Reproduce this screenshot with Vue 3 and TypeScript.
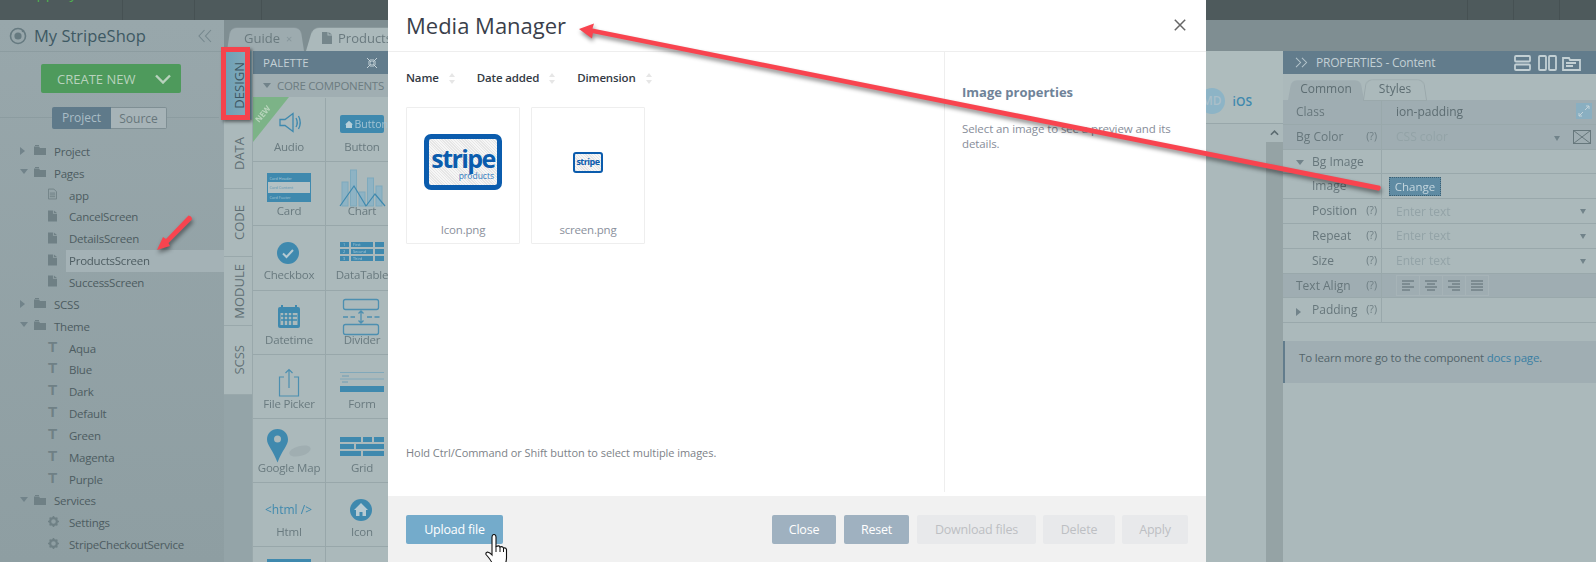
<script setup lang="ts">
type TreeRow = {
  label: string
  icon: 'folder' | 'file' | 'note' | 'theme' | 'gear'
  arrow?: 'open' | 'closed'
  active?: boolean
}

type PropRow = {
  label: string
  help?: boolean
  indent?: boolean
  arrow?: 'open' | 'closed'
  value?: string
  hint?: string
  caret?: boolean
}

const tree: TreeRow[] = [
  { label: 'Project', icon: 'folder', arrow: 'closed' },
  { label: 'Pages', icon: 'folder', arrow: 'open' },
  { label: 'app', icon: 'note' },
  { label: 'CancelScreen', icon: 'file' },
  { label: 'DetailsScreen', icon: 'file' },
  { label: 'ProductsScreen', icon: 'file', active: true },
  { label: 'SuccessScreen', icon: 'file' },
  { label: 'SCSS', icon: 'folder', arrow: 'closed' },
  { label: 'Theme', icon: 'folder', arrow: 'open' },
  { label: 'Aqua', icon: 'theme' },
  { label: 'Blue', icon: 'theme' },
  { label: 'Dark', icon: 'theme' },
  { label: 'Default', icon: 'theme' },
  { label: 'Green', icon: 'theme' },
  { label: 'Magenta', icon: 'theme' },
  { label: 'Purple', icon: 'theme' },
  { label: 'Services', icon: 'folder', arrow: 'open' },
  { label: 'Settings', icon: 'gear' },
  { label: 'StripeCheckoutService', icon: 'gear' }
]

const sideTabs = ['DESIGN', 'DATA', 'CODE', 'MODULE', 'SCSS']

const palette = [
  'Audio', 'Button', 'Card', 'Chart', 'Checkbox', 'DataTable', 'Datetime', 'Divider',
  'File Picker', 'Form', 'Google Map', 'Grid', 'Html', 'Icon', '', ''
]

const tableRows = [
  { n: '1', name: 'First', y: 16 },
  { n: '2', name: 'Second', y: 23 },
  { n: '3', name: 'Third', y: 30 }
]

const propRows: PropRow[] = [
  { label: 'Bg Image', indent: true, arrow: 'open' },
  { label: 'Image', indent: true, value: 'change' },
  { label: 'Position', indent: true, help: true, hint: 'Enter text', caret: true },
  { label: 'Repeat', indent: true, help: true, hint: 'Enter text', caret: true },
  { label: 'Size', indent: true, help: true, hint: 'Enter text', caret: true }
]
</script>

<template>
  <div class="page">
    <header class="topbar">
      <div class="top-logo"><span>Appery.io</span></div>
      <div class="top-cell w72"></div>
      <div class="top-cell w67"></div>
      <div class="top-spacer"></div>
      <div class="top-cell w45"></div>
      <div class="top-cell w46"></div>
      <div class="top-cell w37"></div>
    </header>

    <div class="main">
      <aside class="sidebar">
        <div class="side-head">
          <svg class="ion-logo" viewBox="0 0 18 18" width="18" height="18">
            <circle cx="9" cy="9" r="7.5" fill="none" stroke="#667a80" stroke-width="1.6" />
            <circle cx="9" cy="9" r="3.6" fill="#667a80" />
            <circle cx="14" cy="4" r="1.3" fill="#667a80" />
          </svg>
          <span class="side-title">My StripeShop</span>
          <svg class="collapse" viewBox="0 0 14 14" width="14" height="14">
            <path d="M6.5 1 1 7l5.5 6M13 1 7.500 7l5.500 6" fill="none" stroke="#75878d" stroke-width="1.100" />
          </svg>
        </div>

        <button class="create-btn">
          <span>CREATE NEW</span>
          <svg viewBox="0 0 16 10" width="16" height="10">
            <path d="M1 1.500 8 8.500l7-7" fill="none" stroke="#b8d2bd" stroke-width="2.400" />
          </svg>
        </button>

        <div class="toggle-row">
          <div class="toggle">
            <span class="toggle-on">Project</span>
            <span class="toggle-off">Source</span>
          </div>
        </div>

        <ul class="tree">
          <li
            v-for="row in tree"
            :key="row.label"
            class="tree-row"
            :class="{ child: !row.arrow, active: row.active }"
          >
            <i v-if="row.arrow" class="tri" :class="row.arrow"></i>
            <svg v-if="row.icon === 'folder'" class="t-icon" viewBox="0 0 12 10" width="12" height="10">
              <path d="M0 1.500h5l1 1.500h6v7H0zM1 0h4v1H1z" fill="#6f8085" />
            </svg>
            <svg v-else-if="row.icon === 'file'" class="t-icon" viewBox="0 0 10 12" width="9" height="12">
              <path d="M0 0h5.500v3.500H10V12H0zM6.500 0 10 2.600H6.500z" fill="#6f8085" />
            </svg>
            <svg v-else-if="row.icon === 'note'" class="t-icon" viewBox="0 0 10 12" width="9" height="12">
              <path d="M.5.500h6l3 3v8h-9z" fill="none" stroke="#6f8085" />
              <path d="M2 5h6M2 7h6M2 9h6" stroke="#6f8085" />
            </svg>
            <span v-else-if="row.icon === 'theme'" class="t-letter">T</span>
            <svg v-else class="t-icon" viewBox="0 0 12 12" width="11" height="11">
              <circle cx="6" cy="6" r="3.700" fill="none" stroke="#6f8085" stroke-width="2.400" />
              <path d="M6 0v2M6 10v2M0 6h2M10 6h2M1.800 1.800l1.400 1.400M8.800 8.800l1.400 1.400M1.800 10.200l1.400-1.400M8.800 3.200l1.400-1.400" stroke="#6f8085" stroke-width="1.700" />
            </svg>
            <span class="t-label">{{ row.label }}</span>
          </li>
        </ul>
      </aside>

      <section class="center">
        <div class="file-tabs">
          <div class="file-tab guide">Guide <small>×</small></div>
          <div class="file-tab products">
            <svg viewBox="0 0 10 12" width="10" height="12">
              <path d="M0 0h5.500v3.500H10V12H0zM6.500 0 10 2.600H6.500z" fill="#75868b" />
            </svg>
            Products
          </div>
        </div>

        <div class="work">
          <nav class="side-tabs">
            <div v-for="(tab, i) in sideTabs" :key="tab" class="side-tab" :class="{ selected: i === 0 }">
              <span>{{ tab }}</span>
            </div>
          </nav>

          <div class="palette">
            <div class="pal-head">
              <span>PALETTE</span>
              <svg viewBox="0 0 12 12" width="12" height="12">
                <path d="M1 1l3.500 3.500M11 1 7.500 4.500M1 11l3.500-3.500M11 11 7.500 7.500M2 5h3V2M10 5H7V2M2 7h3v3M10 7H7v3" fill="none" stroke="#c6d3d8" />
              </svg>
            </div>
            <div class="pal-sub"><i class="tri open"></i>CORE COMPONENTS</div>
            <div class="pal-grid">
              <div v-for="(name, i) in palette" :key="i" class="pal-cell">
                <svg class="pal-icon" viewBox="0 0 72 48" width="72" height="48">
                  <g v-if="name === 'Audio'" fill="none" stroke="#3f89ae" stroke-width="1.300">
                    <path d="M27 21.500h5l8-6v18l-8-6h-5z" />
                    <path d="M43 20q2.500 4.500 0 9M45.500 18q3.500 6.500 0 13" />
                  </g>
                  <g v-else-if="name === 'Button'">
                    <rect x="14" y="17" width="44" height="18" rx="2" fill="#3f89ae" />
                    <path d="M19 26.500l4-3.800 4 3.800h-1v3.500h-6v-3.500z" fill="#b7cfd9" />
                    <text x="28.500" y="30" class="svg-btn">Button</text>
                  </g>
                  <g v-else-if="name === 'Card'">
                    <rect x="14" y="11" width="44" height="29" fill="#3f89ae" />
                    <rect x="15" y="20" width="42" height="11" fill="#b3c1c4" />
                    <text x="16.500" y="17.500" class="svg-tiny light">Card Header</text>
                    <text x="16.500" y="27" class="svg-tiny">Card Content</text>
                    <text x="16.500" y="37" class="svg-tiny light">Card Footer</text>
                  </g>
                  <g v-else-if="name === 'Chart'">
                    <g fill="#8eb3c4" stroke="#7eaabd">
                      <rect x="16" y="20" width="6" height="24" />
                      <rect x="24.500" y="8" width="6" height="36" />
                      <rect x="33" y="30" width="6" height="14" />
                      <rect x="41.500" y="16" width="6" height="28" />
                      <rect x="50" y="24" width="6" height="20" />
                    </g>
                    <path d="M14 44l14-20 12 20 9-12 10 12" fill="none" stroke="#3f89ae" stroke-width="1.200" />
                  </g>
                  <g v-else-if="name === 'Checkbox'">
                    <circle cx="35" cy="27" r="11" fill="#3f89ae" />
                    <path d="M30 27.500l3.500 3.500 6.500-7" fill="none" stroke="#b6cad2" stroke-width="2" />
                  </g>
                  <g v-else-if="name === 'DataTable'">
                    <g v-for="row in tableRows" :key="row.n">
                      <rect x="14" :y="row.y" width="9" height="5" fill="#3f89ae" />
                      <rect x="25" :y="row.y" width="22" height="5" fill="#3f89ae" />
                      <rect x="49" :y="row.y" width="9" height="5" fill="#3f89ae" />
                      <text x="17" :y="row.y + 4" class="svg-tiny light">{{ row.n }}</text>
                      <text x="27" :y="row.y + 4" class="svg-tiny light">{{ row.name }}</text>
                    </g>
                  </g>
                  <g v-else-if="name === 'Datetime'">
                    <rect x="25" y="16" width="22" height="21" rx="2" fill="#3f89ae" />
                    <path d="M29 14v4M43 14v4" stroke="#3f89ae" stroke-width="2" />
                    <rect x="27.500" y="22" width="17" height="12" fill="#abb9bb" />
                    <path d="M28 25h16M28 29h16M31 22v12M35 22v12M39 22v12" stroke="#3f89ae" stroke-width="1.500" />
                  </g>
                  <g v-else-if="name === 'Divider'" fill="none" stroke="#4d8fb0" stroke-width="1.300">
                    <rect x="17.500" y="8.500" width="35" height="10" rx="2" />
                    <rect x="17.500" y="33.500" width="35" height="10" rx="2" />
                    <path d="M17 26h12M41 26h13" stroke-dasharray="5 2.500" />
                    <path d="M35 20v12M32.500 22.500 35 20l2.500 2.500M32.500 29.500 35 32l2.500-2.500" />
                  </g>
                  <g v-else-if="name === 'File Picker'" fill="none" stroke="#4d8fb0" stroke-width="1.200">
                    <path d="M31 22h-4.500v19h19V22H41M36 33V15M32.500 18l3.500-3.500 3.500 3.500" />
                  </g>
                  <g v-else-if="name === 'Form'">
                    <path d="M14 17.500h44M14 24h44" stroke="#81a8ba" />
                    <path d="M16 21h7M16 27h6" stroke="#6e9cb3" />
                    <rect x="14" y="31" width="44" height="6" fill="#3f89ae" />
                  </g>
                  <g v-else-if="name === 'Google Map'">
                    <ellipse cx="47" cy="32" rx="11" ry="5" fill="#a0aeb1" transform="rotate(-15 47 32)" />
                    <path d="M24.500 10c6 0 10.500 4.500 10.500 10.500 0 6-5.500 10-10.500 23C20 31 14 26.500 14 20.500 14 14.500 18.500 10 24.500 10z" fill="#3f89ae" />
                    <circle cx="24.500" cy="20" r="3.500" fill="#abb9bb" />
                  </g>
                  <g v-else-if="name === 'Grid'" fill="#3f89ae">
                    <rect x="14" y="18" width="21" height="5" />
                    <rect x="37" y="18" width="9" height="5" />
                    <rect x="48" y="18" width="10" height="5" />
                    <rect x="14" y="25" width="14" height="5" />
                    <rect x="30" y="25" width="28" height="5" />
                    <rect x="14" y="32" width="21" height="5" />
                    <rect x="37" y="32" width="21" height="5" />
                  </g>
                  <text v-else-if="name === 'Html'" x="35.500" y="31" text-anchor="middle" class="svg-html">&lt;html /&gt;</text>
                  <g v-else-if="name === 'Icon'">
                    <circle cx="35" cy="27" r="11" fill="#3f89ae" />
                    <path d="M35 20l7 7h-2v6h-3.500v-4h-3v4H30v-6h-2z" fill="#b6cad2" />
                  </g>
                  <rect v-else-if="i === 14" x="14" y="12" width="44" height="10" fill="#3f89ae" />
                </svg>
                <span class="pal-label">{{ name }}</span>
              </div>
              <div class="new-ribbon"><span>NEW</span></div>
            </div>
          </div>

          <div class="canvas">
            <div class="canvas-top">
              <span class="md-dot">MD</span>
              <span class="ios">iOS</span>
            </div>
            <div class="canvas-body">
              <div class="scroll">
                <svg viewBox="0 0 10 6" width="9" height="6">
                  <path d="M1 5l4-4 4 4" fill="none" stroke="#5b6b70" stroke-width="1.800" />
                </svg>
              </div>
            </div>
          </div>
        </div>
      </section>

      <aside class="props">
        <div class="props-head">
          <svg viewBox="0 0 14 12" width="13" height="11">
            <path d="M1 1l5 5-5 5M7.500 1l5 5-5 5" fill="none" stroke="#b5c5cc" stroke-width="1.100" />
          </svg>
          <span class="props-title">PROPERTIES - Content</span>
          <svg class="props-tool" viewBox="0 0 68 16" width="68" height="16">
            <g fill="none" stroke="#c3d0d4" stroke-width="1.800">
              <rect x="1" y="1" width="15" height="5.500" rx="1" />
              <rect x="1" y="9.500" width="15" height="5.500" rx="1" />
              <rect x="25" y="1" width="7" height="14" rx="1" />
              <rect x="35" y="1" width="7" height="14" rx="1" />
              <path d="M49 15V3h6l1 2h10v10zM52 8h10M52 11h7" />
            </g>
          </svg>
        </div>
        <div class="props-tabs">
          <div class="p-tab common">Common</div>
          <div class="p-tab styles">Styles</div>
        </div>

        <div class="p-row dark">
          <div class="p-label">Class</div>
          <div class="p-value"><span class="val">ion-padding</span>
            <svg class="expand" viewBox="0 0 16 16" width="16" height="16">
              <rect width="16" height="16" fill="#8aafc1" />
              <path d="M9 7l4-4M10 3h3v3M7 9l-4 4M3 10v3h3" fill="none" stroke="#c4d3d9" />
            </svg>
          </div>
        </div>
        <div class="p-row dark">
          <div class="p-label">Bg Color <em>(?)</em></div>
          <div class="p-value">
            <span class="hint">CSS color</span>
            <i class="tri open small color-caret"></i>
            <svg class="no-color" viewBox="0 0 18 14" width="18" height="14">
              <rect x=".5" y=".5" width="17" height="13" fill="none" stroke="#66777c" />
              <path d="M.5.500l17 13M17.500.500l-17 13" stroke="#66777c" />
            </svg>
          </div>
        </div>

        <div v-for="row in propRows" :key="row.label" class="p-row">
          <div class="p-label" :class="{ indent: row.indent }">
            <i v-if="row.arrow" class="tri open row-tri"></i>
            {{ row.label }}
            <em v-if="row.help">(?)</em>
          </div>
          <div class="p-value">
            <button v-if="row.value === 'change'" class="change">Change</button>
            <span v-if="row.hint" class="hint">{{ row.hint }}</span>
            <i v-if="row.caret" class="tri open small end-caret"></i>
          </div>
        </div>

        <div class="p-row dark">
          <div class="p-label">Text Align <em>(?)</em></div>
          <div class="p-value">
            <div class="align-group">
              <span v-for="n in 4" :key="n" class="align-cell">
                <svg viewBox="0 0 12 11" width="12" height="11">
                  <path v-if="n === 1" d="M0 1h12M0 4h8M0 7h12M0 10h8" stroke="#5a6a70" />
                  <path v-else-if="n === 2" d="M0 1h12M2 4h8M0 7h12M2 10h8" stroke="#5a6a70" />
                  <path v-else-if="n === 3" d="M0 1h12M4 4h8M0 7h12M4 10h8" stroke="#5a6a70" />
                  <path v-else d="M0 1h12M0 4h12M0 7h12M0 10h12" stroke="#5a6a70" />
                </svg>
              </span>
            </div>
          </div>
        </div>
        <div class="p-row">
          <div class="p-label indent"><i class="tri closed row-tri"></i>Padding <em>(?)</em></div>
          <div class="p-value"></div>
        </div>

        <div class="note">To learn more go to the component <a>docs page</a>.</div>
      </aside>
    </div>

    <div class="modal">
      <div class="m-head">
        <h1>Media Manager</h1>
        <svg viewBox="0 0 12 12" width="12" height="12">
          <path d="M.8.800l10.400 10.400M11.200.800.800 11.200" stroke="#666" stroke-width="1.500" />
        </svg>
      </div>
      <div class="m-body">
        <div class="m-left">
          <div class="sorts">
            <span v-for="s in ['Name', 'Date added', 'Dimension']" :key="s" class="sort">
              {{ s }}
              <i class="sort-caret"></i>
            </span>
          </div>
          <div class="files">
            <div class="file-card">
              <div class="thumb">
                <div class="stripe-logo big">
                  <b>stripe</b>
                  <span>products</span>
                </div>
              </div>
              <span class="f-name">Icon.png</span>
            </div>
            <div class="file-card">
              <div class="thumb">
                <div class="stripe-logo tiny">
                  <b>stripe</b>
                </div>
              </div>
              <span class="f-name">screen.png</span>
            </div>
          </div>
          <p class="m-hint">Hold Ctrl/Command or Shift button to select multiple images.</p>
        </div>
        <div class="m-right">
          <h2>Image properties</h2>
          <p>Select an image to see a preview and its details.</p>
        </div>
      </div>
      <div class="m-foot">
        <button class="btn upload">Upload file</button>
        <div class="foot-right">
          <button class="btn muted w-close">Close</button>
          <button class="btn muted w-reset">Reset</button>
          <button class="btn off w-download">Download files</button>
          <button class="btn off w-delete">Delete</button>
          <button class="btn off w-apply">Apply</button>
        </div>
      </div>
    </div>

    <!-- annotations painted over the screenshot -->
    <div class="red-box"></div>
    <svg class="marks" viewBox="0 0 1596 562" width="1596" height="562">
      <path d="M1380 185.800 592.500 28.500 594 23.500 579 29 592 38.500 592.900 33.300 1379 190.800Q1382 188 1380 185.800z" fill="#f8444f" />
      <path d="M188.500 215.500 166 239 163 237 157 250 170 246 168.500 243 192 219.500Q192 216 188.500 215.500z" fill="#f8444f" />
    </svg>
    <svg class="hand" viewBox="0 0 24 30" width="24" height="30">
      <path d="M7 3q0-2.500 2-2.500T11 3v9.500q3.500-1.500 4 .5 2.500-1 3.500 1 2.500-.5 3 1.500V24q0 2-1 6H7.500Q6 26 1 20.500q-.5-2 1.500-2.500Q5 18.500 7 21z" fill="#fff" stroke="#111" stroke-width="1.100" />
      <path d="M11 12.500V18M15 13v5M18.500 14v4" stroke="#111" fill="none" />
    </svg>
  </div>
</template>

<style>
html,
body {
  margin: 0;
  overflow: hidden;
}
</style>

<style scoped>
.page {
  position: relative;
  width: 1596px;
  height: 562px;
  overflow: hidden;
  font-family: "Open Sans", "Liberation Sans", sans-serif;
  font-size: 12px;
  color: #4d5d62;
  background: #abb9bb;
}

.topbar {
  display: flex;
  height: 20px;
  background: #4e5a5c;
}
.top-logo {
  width: 122px;
  overflow: hidden;
  border-right: 1px solid #465153;
}
.top-logo span {
  display: block;
  margin: -20px 0 0 27px;
  font-size: 15px;
  line-height: 24px;
  color: #4fae4f;
}
.top-cell {
  border-right: 1px solid #465153;
}
.w72 { width: 71px; }
.w67 { width: 66px; }
.w45 { width: 45px; }
.w46 { width: 45px; }
.w37 { width: 36px; border-right: 0; }
.top-spacer {
  flex: 1;
  border-right: 1px solid #465153;
}

.main {
  display: flex;
  height: 542px;
}

.sidebar {
  width: 224px;
  flex: none;
  background: linear-gradient(#98a7ab, #8e9ea2);
}
.side-head {
  display: flex;
  align-items: center;
  height: 31px;
  padding: 0 12px 0 9px;
  border-bottom: 1px solid #8c9ca0;
}
.ion-logo {
  flex: none;
}
.side-title {
  flex: 1;
  margin-left: 7px;
  font-size: 16.500px;
  color: #3e5963;
}
.create-btn {
  display: flex;
  align-items: center;
  justify-content: space-between;
  box-sizing: border-box;
  width: 140px;
  height: 29px;
  margin: 12px 0 0 41px;
  padding: 0 10px 0 16px;
  border: 0;
  border-radius: 2px;
  background: #4e9a5c;
  font: 13px "Open Sans", sans-serif;
  color: #b8d2bd;
}
.toggle-row {
  display: flex;
  justify-content: center;
  width: 219px;
  margin-top: 14px;
  background: linear-gradient(#8c9ca0, #8c9ca0) 0 10px / 224px 1px no-repeat;
}
.toggle {
  display: flex;
  height: 22px;
  line-height: 21px;
  font-size: 12px;
}
.toggle-on {
  width: 59px;
  text-align: center;
  border-radius: 2px 0 0 2px;
  background: #5f7a8a;
  color: #aabdc6;
}
.toggle-off {
  box-sizing: border-box;
  width: 56px;
  text-align: center;
  border: 1px solid #7f8f94;
  border-left: 0;
  border-radius: 0 2px 2px 0;
  background: #a6b3b7;
  color: #66767b;
}

.tree {
  margin: 0;
  padding: 12px 0 0;
  list-style: none;
}
.tree-row {
  position: relative;
  display: flex;
  align-items: center;
  height: 21.850px;
  padding-left: 34px;
  color: #4d5c61;
}
.tree-row.child {
  padding-left: 48px;
}
.tree-row .t-icon {
  flex: none;
  margin-top: -3px;
}
.t-label {
  position: absolute;
  left: 54px;
  font-size: 11.500px;
  letter-spacing: -.24px;
  line-height: 22px;
  white-space: nowrap;
}
.child .t-label {
  left: 69px;
}
.tree-row.active::after {
  content: "";
  position: absolute;
  left: 66px;
  right: 0;
  top: 0;
  bottom: 0;
  background: #a4b2b6;
}
.tree-row.active .t-label {
  z-index: 1;
}
.t-letter {
  width: 10px;
  margin-top: -4px;
  font-family: "Liberation Sans", sans-serif;
  font-size: 15px;
  font-weight: 700;
  line-height: 18px;
  color: #6f8085;
}
.tri {
  display: block;
  width: 0;
  height: 0;
}
.tri.open {
  border: 4px solid transparent;
  border-top: 5px solid #71838a;
  border-bottom: 0;
}
.tri.closed {
  border: 4px solid transparent;
  border-left: 5px solid #71838a;
  border-right: 0;
}
.tri.small {
  border-width: 3.500px;
  border-top-width: 5px;
  border-bottom-width: 0;
}
.tree-row .tri {
  position: absolute;
  left: 20px;
  top: 6px;
}

.center {
  flex: 1;
  min-width: 0;
  display: flex;
  flex-direction: column;
}
.file-tabs {
  display: flex;
  align-items: flex-end;
  flex: none;
  height: 31px;
  padding-left: 3px;
  gap: 2px;
  background: #7f8e92;
  overflow: hidden;
}
.file-tab {
  position: relative;
  z-index: 0;
  display: flex;
  align-items: center;
  gap: 6px;
  height: 26px;
  font-size: 13px;
  white-space: nowrap;
  color: #6a7a7f;
}
.file-tab::before {
  content: "";
  position: absolute;
  z-index: -1;
  inset: 0;
  border-radius: 7px 7px 0 0;
  transform: perspective(40px) rotateX(9deg);
  transform-origin: bottom;
}
.file-tab small {
  font-size: 11px;
  color: #85959a;
}
.guide {
  width: 77px;
  padding-left: 17px;
  box-sizing: border-box;
}
.guide::before {
  background: #9dabaf;
}
.products {
  width: 150px;
  padding-left: 16px;
  box-sizing: border-box;
}
.products::before {
  background: #abb9bb;
}

.work {
  flex: 1;
  display: flex;
  min-height: 0;
}
.side-tabs {
  flex: none;
  width: 29px;
  background: #94a4a8;
}
.side-tab {
  box-sizing: border-box;
  display: flex;
  align-items: center;
  justify-content: center;
  height: 68.800px;
  background: #abb9bb;
  border-bottom: 1px solid #99a8ab;
}
.side-tab span {
  writing-mode: vertical-rl;
  transform: rotate(180deg);
  font-size: 13px;
  color: #5f6f74;
}
.side-tab.selected {
  background: linear-gradient(90deg, #6d9fb5, #86acbb);
}
.side-tab.selected span {
  color: #3d5763;
}

.palette {
  flex: none;
  width: 146px;
  border-left: 1px solid #99a8ab;
  margin-left: -1px;
}
.pal-head {
  display: flex;
  align-items: center;
  justify-content: space-between;
  height: 23px;
  padding: 0 21px 0 10px;
  background: #627c8c;
  font-size: 11.500px;
  color: #c3d0d5;
}
.pal-sub {
  display: flex;
  align-items: center;
  gap: 6px;
  height: 23px;
  padding-left: 10px;
  background: #a0aeb2;
  font-size: 11.500px;
  letter-spacing: -.3px;
  white-space: nowrap;
  color: #6c7c81;
}
.pal-grid {
  position: relative;
  display: grid;
  grid-template-columns: 73px 73px;
  grid-auto-rows: 64.200px;
  padding-top: 1px;
  overflow: hidden;
}
.pal-cell {
  box-sizing: border-box;
  display: flex;
  flex-direction: column;
  align-items: center;
  border-right: 1px solid #98a7aa;
  border-bottom: 1px solid #98a7aa;
}
.pal-icon {
  flex: none;
  margin-bottom: -7px;
  overflow: visible;
}
.pal-label {
  position: relative;
  line-height: 16px;
  font-size: 11.500px;
  letter-spacing: -.2px;
  color: #697a7f;
}
.svg-btn {
  font: 10.500px "Open Sans", sans-serif;
  fill: #a3c3d2;
}
.svg-tiny {
  font: 3.800px "Open Sans", sans-serif;
  fill: #5a93b0;
}
.svg-tiny.light {
  fill: #a9c8d5;
}
.svg-html {
  font: 12px "Open Sans", sans-serif;
  fill: #3f89ae;
}
.new-ribbon {
  position: absolute;
  left: 0;
  top: 0;
  width: 36px;
  height: 45px;
  background: #7cb387;
  clip-path: polygon(0 0, 100% 0, 0 100%);
}
.new-ribbon span {
  position: absolute;
  left: 0;
  top: 11px;
  font-size: 8px;
  font-weight: 700;
  color: #b9d5bd;
  transform: rotate(-50deg);
}

.canvas {
  flex: 1;
  display: flex;
  flex-direction: column;
  min-width: 0;
}
.canvas-top {
  display: flex;
  align-items: center;
  justify-content: flex-end;
  flex: none;
  height: 73px;
  padding: 28px 31px 0 0;
  box-sizing: border-box;
  background: #aebcbd;
  border-bottom: 1px solid #98a7aa;
}
.md-dot {
  width: 26px;
  height: 26px;
  margin-right: 8px;
  border-radius: 50%;
  background: #8db4c6;
  line-height: 26px;
  text-align: center;
  font-weight: 600;
  color: #aabfc9;
}
.ios {
  font-weight: 600;
  color: #3f89ae;
}
.canvas-body {
  flex: 1;
  display: flex;
  justify-content: flex-end;
}
.scroll {
  width: 17px;
  display: flex;
  justify-content: center;
  padding-top: 6px;
  box-sizing: border-box;
  background: linear-gradient(#abb9bb 18px, #95a3a5 18px);
}

.props {
  flex: none;
  width: 313px;
  padding-top: 31px;
  background: linear-gradient(#7f8e92 31px, #abb9bb 31px);
}
.props-head {
  display: flex;
  align-items: center;
  height: 23px;
  padding: 0 14px 0 12px;
  background: #627c8c;
}
.props-title {
  flex: 1;
  margin-left: 8px;
  font-size: 12px;
  letter-spacing: -.2px;
  color: #c3d0d5;
}
.props-tabs {
  display: flex;
  align-items: flex-end;
  height: 26px;
  padding-left: 5px;
}
.p-tab {
  position: relative;
  z-index: 0;
  height: 22px;
  line-height: 22px;
  text-align: center;
  font-size: 12px;
  color: #5d6d72;
}
.p-tab::before {
  content: "";
  position: absolute;
  z-index: -1;
  inset: 0;
  border-radius: 6px 6px 0 0;
  transform: perspective(30px) rotateX(8deg);
  transform-origin: bottom;
}
.common {
  width: 76px;
}
.common::before {
  background: #9fadb1;
}
.styles {
  width: 62px;
}
.styles::before {
  background: #abb9bb;
  box-shadow: 0 0 0 1px #9aa8ab;
}

.p-row {
  display: flex;
  height: 24.800px;
  box-sizing: border-box;
  border-bottom: 1px solid #99a8ab;
  line-height: 23px;
}
.p-row.dark {
  background: #9fadb2;
}
.p-label {
  position: relative;
  box-sizing: border-box;
  flex: none;
  width: 99px;
  padding-left: 13px;
  border-right: 1px solid #99a8ab;
  color: #67777c;
  font-size: 12px;
}
.p-label.indent {
  padding-left: 29px;
}
.p-label em {
  position: absolute;
  right: 4px;
  top: 0;
  font-style: normal;
  font-size: 10.500px;
  color: #6e7e83;
}
.row-tri {
  position: absolute;
  left: 13px;
  top: 10px;
}
.p-value {
  position: relative;
  flex: 1;
  display: flex;
  align-items: center;
  padding-left: 14px;
}
.val {
  color: #5d6d72;
}
.hint {
  color: #93a3a7;
}
.expand {
  position: absolute;
  right: 4px;
  top: 3px;
}
.no-color {
  position: absolute;
  right: 5px;
  top: 5px;
}
.color-caret {
  position: absolute;
  right: 36px;
  top: 11px;
}
.end-caret {
  position: absolute;
  right: 10px;
  top: 10px;
}
.change {
  width: 52px;
  height: 19px;
  margin-left: -7px;
  padding: 0;
  border: 1px dotted #3c5f72;
  background: #5f8ba3;
  font: 11.500px "Open Sans", sans-serif;
  color: #c5d6de;
}
.align-group {
  display: flex;
  border: 1px solid #a6b3b7;
}
.align-cell {
  display: flex;
  align-items: center;
  justify-content: center;
  width: 22px;
  height: 19px;
  border-right: 1px solid #a6b3b7;
}
.align-cell:last-child {
  border-right: 0;
}
.note {
  box-sizing: border-box;
  height: 42px;
  margin-top: 18px;
  padding: 9px 14px;
  border-left: 2px solid #627c8c;
  background: #a0aeb3;
  font-size: 11.500px;
  letter-spacing: -.18px;
  color: #53646a;
}
.note a {
  color: #3a7fa3;
}

.modal {
  position: absolute;
  left: 388px;
  top: 0;
  display: flex;
  flex-direction: column;
  width: 818px;
  height: 562px;
  background: #fff;
}
.m-head {
  display: flex;
  align-items: center;
  justify-content: space-between;
  box-sizing: border-box;
  height: 52px;
  padding: 0 20px 2px 18px;
  border-bottom: 1px solid #eee;
}
.m-head h1 {
  margin: 0;
  font-size: 22px;
  font-weight: 400;
  color: #3a3f4b;
}
.m-body {
  display: flex;
  height: 444px;
}
.m-left {
  box-sizing: border-box;
  display: flex;
  flex-direction: column;
  width: 557px;
  height: 440px;
  padding: 17px 18px 31px;
  border-right: 1px solid #eee;
}
.sorts {
  display: flex;
  gap: 21px;
  line-height: 18px;
}
.sort {
  display: flex;
  align-items: center;
  gap: 10px;
  font-size: 11.500px;
  letter-spacing: -.15px;
  font-weight: 600;
  color: #333a44;
}
.sort-caret {
  position: relative;
  width: 7px;
  height: 11px;
}
.sort-caret::before,
.sort-caret::after {
  content: "";
  position: absolute;
  left: 0;
  border: 3.500px solid transparent;
}
.sort-caret::before {
  top: -3px;
  border-bottom: 4px solid #e6e6e6;
}
.sort-caret::after {
  bottom: -3px;
  border-top: 4px solid #e6e6e6;
}
.files {
  display: flex;
  gap: 11px;
  margin-top: 20px;
}
.file-card {
  box-sizing: border-box;
  display: flex;
  flex-direction: column;
  align-items: center;
  width: 114px;
  height: 137px;
  border: 1px solid #eee;
  border-radius: 1px;
}
.thumb {
  flex: none;
  display: flex;
  align-items: center;
  justify-content: center;
  width: 100%;
  height: 108px;
  margin-bottom: 6px;
}
.f-name {
  font-size: 11.500px;
  letter-spacing: -.2px;
  color: #8a909c;
}
.stripe-logo {
  box-sizing: border-box;
  display: flex;
  flex-direction: column;
  align-items: center;
  border: 5px solid #0b5cad;
  color: #0b5cad;
  background: repeating-linear-gradient(45deg, #f6f6f6, #f6f6f6 1px, #e6e6e6 1px, #e6e6e6 2px);
}
.stripe-logo b {
  font-family: "Open Sans", sans-serif;
}
.stripe-logo.big {
  width: 78px;
  height: 56px;
  border-radius: 7px;
  padding-top: 6px;
}
.stripe-logo.big b {
  font-size: 25px;
  line-height: 26px;
  letter-spacing: -1.600px;
}
.stripe-logo.big span {
  align-self: flex-end;
  margin: 0 3px 0 0;
  font-size: 8.500px;
  line-height: 9px;
  color: #2f78c0;
}
.stripe-logo.tiny {
  width: 30px;
  height: 21px;
  border-width: 2px;
  border-radius: 3px;
  padding-top: 2px;
}
.stripe-logo.tiny b {
  font-size: 9px;
  line-height: 11px;
  letter-spacing: -.5px;
}
.m-hint {
  margin: auto 0 0;
  font-size: 11px;
  letter-spacing: -.05px;
  line-height: 16px;
  color: #7d8288;
}
.m-right {
  flex: 1;
  padding: 31px 30px 0 17px;
}
.m-right h2 {
  margin: 0;
  font-size: 13px;
  line-height: 18px;
  font-weight: 700;
  color: #6f8399;
}
.m-right p {
  margin: 20px 0 0;
  font-size: 11.500px;
  letter-spacing: -.1px;
  line-height: 15px;
  color: #878d99;
}
.m-foot {
  flex: 1;
  display: flex;
  align-items: flex-start;
  justify-content: space-between;
  padding: 19px 18px 0;
  background: #f1f1f1;
}
.foot-right {
  display: flex;
  gap: 8px;
}
.btn {
  height: 29px;
  padding: 0;
  border: 0;
  border-radius: 2px;
  font: 12.500px "Open Sans", sans-serif;
  letter-spacing: -.2px;
}
.upload {
  width: 97px;
  background: #74abcb;
  color: #fff;
}
.muted {
  background: #9fb1c0;
  color: #fff;
}
.off {
  background: #e8e9eb;
  color: #bdbfc3;
}
.w-close { width: 64px; }
.w-reset { width: 65px; }
.w-download { width: 119px; }
.w-delete { width: 72px; margin-left: -1px; }
.w-apply { width: 66px; margin-left: -1px; }

.red-box {
  position: absolute;
  left: 221px;
  top: 47px;
  box-sizing: border-box;
  width: 29px;
  height: 73px;
  border: 5px solid #f5434c;
  box-shadow: 2px 2px 3px rgba(0, 0, 0, .45);
}
.marks {
  position: absolute;
  left: 0;
  top: 0;
  pointer-events: none;
  filter: drop-shadow(1px 3px 2px rgba(0, 0, 0, .45));
}
.hand {
  position: absolute;
  left: 485px;
  top: 534px;
}
</style>
